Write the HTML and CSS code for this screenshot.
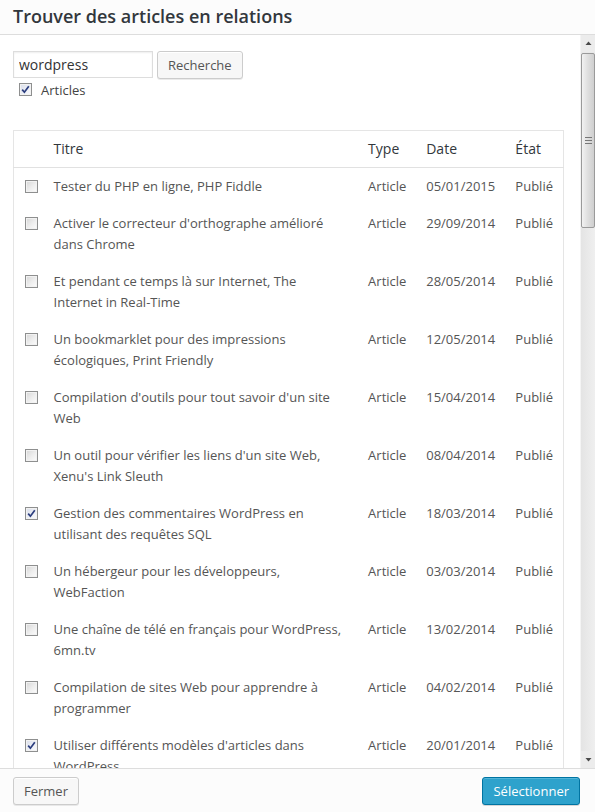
FILE: index.html
```html
<!DOCTYPE html>
<html lang="fr">
<head>
<meta charset="utf-8">
<title>Trouver des articles en relations</title>
<link rel="stylesheet" href="styles.css">
</head>
<body>
<div class="modal">
  <header class="modal-head">
    <h1>Trouver des articles en relations</h1>
  </header>
  <div class="modal-body">
    <div class="content">
      <div class="search-row">
        <input class="search-input" type="text" value="wordpress">
        <button class="btn">Recherche</button>
      </div>
      <label class="type-filter"><span class="cb checked"><svg viewBox="0 0 11 11" width="11" height="11"><path d="M2.2 5.6 L4.4 8.2 L8.8 2.2" fill="none" stroke="#2b3d7e" stroke-width="1.7"/></svg></span>Articles</label>

      <table class="results">
        <colgroup>
          <col class="c-cb"><col class="c-title"><col class="c-type"><col class="c-date"><col class="c-state">
        </colgroup>
        <thead>
          <tr><th></th><th>Titre</th><th>Type</th><th>Date</th><th>État</th></tr>
        </thead>
        <tbody>
          <tr><td><span class="cb"></span></td><td>Tester du PHP en ligne, PHP Fiddle</td><td>Article</td><td>05/01/2015</td><td>Publié</td></tr>
          <tr><td><span class="cb"></span></td><td>Activer le correcteur d'orthographe amélioré dans Chrome</td><td>Article</td><td>29/09/2014</td><td>Publié</td></tr>
          <tr><td><span class="cb"></span></td><td>Et pendant ce temps là sur Internet, The Internet in Real-Time</td><td>Article</td><td>28/05/2014</td><td>Publié</td></tr>
          <tr><td><span class="cb"></span></td><td>Un bookmarklet pour des impressions écologiques, Print Friendly</td><td>Article</td><td>12/05/2014</td><td>Publié</td></tr>
          <tr><td><span class="cb"></span></td><td>Compilation d'outils pour tout savoir d'un site Web</td><td>Article</td><td>15/04/2014</td><td>Publié</td></tr>
          <tr><td><span class="cb"></span></td><td>Un outil pour vérifier les liens d'un site Web, Xenu's Link Sleuth</td><td>Article</td><td>08/04/2014</td><td>Publié</td></tr>
          <tr><td><span class="cb checked"><svg viewBox="0 0 11 11" width="11" height="11"><path d="M2.2 5.6 L4.4 8.2 L8.8 2.2" fill="none" stroke="#2b3d7e" stroke-width="1.7"/></svg></span></td><td>Gestion des commentaires WordPress en utilisant des requêtes SQL</td><td>Article</td><td>18/03/2014</td><td>Publié</td></tr>
          <tr><td><span class="cb"></span></td><td>Un hébergeur pour les développeurs, WebFaction</td><td>Article</td><td>03/03/2014</td><td>Publié</td></tr>
          <tr><td><span class="cb"></span></td><td>Une chaîne de télé en français pour WordPress, 6mn.tv</td><td>Article</td><td>13/02/2014</td><td>Publié</td></tr>
          <tr><td><span class="cb"></span></td><td>Compilation de sites Web pour apprendre à programmer</td><td>Article</td><td>04/02/2014</td><td>Publié</td></tr>
          <tr><td><span class="cb checked"><svg viewBox="0 0 11 11" width="11" height="11"><path d="M2.2 5.6 L4.4 8.2 L8.8 2.2" fill="none" stroke="#2b3d7e" stroke-width="1.7"/></svg></span></td><td>Utiliser différents modèles d'articles dans WordPress</td><td>Article</td><td>20/01/2014</td><td>Publié</td></tr>
        </tbody>
      </table>
    </div>
    <div class="scrollbar" aria-hidden="true">
      <div class="sb-btn"><svg viewBox="0 0 15 17" width="15" height="17"><path d="M4.5 10 L7.5 6.5 L10.5 10 Z" fill="#4a4a4a"/></svg></div>
      <div class="sb-thumb"><span class="grip"></span></div>
      <div class="sb-track"></div>
      <div class="sb-btn"><svg viewBox="0 0 15 17" width="15" height="17"><path d="M4.5 7 L7.5 10.5 L10.5 7 Z" fill="#4a4a4a"/></svg></div>
    </div>
  </div>
  <footer class="modal-foot">
    <button class="btn">Fermer</button>
    <button class="btn btn-primary">Sélectionner</button>
  </footer>
</div>
</body>
</html>
```

FILE: styles.css
```css
* { box-sizing: border-box; }

html, body {
  margin: 0;
  padding: 0;
  background: #fff;
}

body {
  font-family: "Open Sans", "Liberation Sans", sans-serif;
  font-size: 13px;
  color: #444;
}

.modal {
  width: 595px;
  height: 812px;
  display: flex;
  flex-direction: column;
  background: #fff;
}

.modal-head {
  height: 35px;
  flex: none;
  border-bottom: 1px solid #dddddd;
  background: #fcfcfc;
  padding: 0 13px;
}

.modal-head h1 {
  margin: 0;
  font-size: 18px;
  font-weight: 600;
  line-height: 32px;
  color: #32373c;
}

.modal-body {
  flex: 1;
  display: flex;
  min-height: 0;
}

.content {
  flex: 1;
  overflow: hidden;
  padding: 16px 16px 0 13px;
  background: #fff;
}

.search-row {
  display: flex;
  gap: 4px;
  align-items: flex-start;
}

.search-input {
  width: 140px;
  height: 27px;
  margin: 0;
  border: 1px solid #dddddd;
  box-shadow: inset 0 1px 2px rgba(0,0,0,.07);
  padding: 0 5px;
  font-family: inherit;
  font-size: 14px;
  color: #333;
  background: #fff;
  outline: none;
}

.btn {
  height: 28px;
  margin: 0;
  padding: 0 10px 1px;
  font-family: inherit;
  font-size: 13px;
  line-height: 26px;
  color: #555;
  background: #f7f7f7;
  border: 1px solid #cccccc;
  border-radius: 3px;
  box-shadow: inset 0 1px 0 #fff, 0 1px 0 rgba(0,0,0,.08);
  cursor: pointer;
}

.btn-primary {
  color: #fff;
  background: #2ea2cc;
  border-color: #0074a2;
  box-shadow: inset 0 1px 0 rgba(120,200,230,.5), 0 1px 0 rgba(0,0,0,.15);
}

.type-filter {
  display: flex;
  align-items: center;
  gap: 9px;
  margin: 3px 0 0 6px;
  height: 15px;
  font-size: 13px;
  color: #444;
}

.cb {
  display: inline-flex;
  align-items: center;
  justify-content: center;
  width: 13px;
  height: 13px;
  flex: none;
  border: 1px solid #8e8f8f;
  background: linear-gradient(135deg, #d6d6d6 0%, #eeeeee 55%, #fdfdfd 100%);
  box-shadow: inset 0 0 0 1px #f2f2f2;
}

.cb.checked {
  background: linear-gradient(135deg, #d9deea 0%, #eef0f6 60%, #fbfbfd 100%);
}

.cb svg { display: block; }

.results {
  margin-top: 33px;
  width: 551px;
  table-layout: fixed;
  border-collapse: collapse;
  border: 1px solid #e5e5e5;
  background: #fff;
}

.c-cb { width: 30px; }
.c-title { width: 314px; }
.c-type { width: 58px; }
.c-date { width: 89px; }
.c-state { width: 58px; }

.results th {
  text-align: left;
  font-weight: 400;
  font-size: 14px;
  line-height: 20px;
  color: #32373c;
  padding: 8px 10px;
  border-bottom: 1px solid #e1e1e1;
}

.results td {
  vertical-align: top;
  padding: 8px 10px;
  line-height: 21px;
  color: #555;
}

.results td:first-child {
  padding-left: 11px;
  padding-right: 0;
}

.results td:first-child .cb {
  display: flex;
  margin-top: 4px;
}

.scrollbar {
  width: 15px;
  flex: none;
  display: flex;
  flex-direction: column;
  background: #e9e9e9;
  border-left: 1px solid #f4f4f4;
}

.sb-btn {
  height: 17px;
  flex: none;
  background: #ececec;
}

.sb-btn svg { display: block; }

.sb-thumb {
  height: 175px;
  flex: none;
  margin: 1px 0 0;
  border: 1px solid #9a9a9a;
  border-radius: 2px;
  background: linear-gradient(90deg, #f2f2f2 0%, #e0e0e0 45%, #cfcfcf 100%);
  display: flex;
  align-items: center;
  justify-content: center;
}

.grip {
  width: 7px;
  height: 7px;
  background: repeating-linear-gradient(180deg, #777 0 1px, transparent 1px 3px);
}

.sb-track {
  flex: 1;
  background: linear-gradient(90deg, #e4e4e4, #efefef);
}

.modal-foot {
  height: 44px;
  flex: none;
  border-top: 1px solid #dddddd;
  background: #fcfcfc;
  padding: 8px 15px 0 13px;
  display: flex;
  justify-content: space-between;
  align-items: flex-start;
}
```
